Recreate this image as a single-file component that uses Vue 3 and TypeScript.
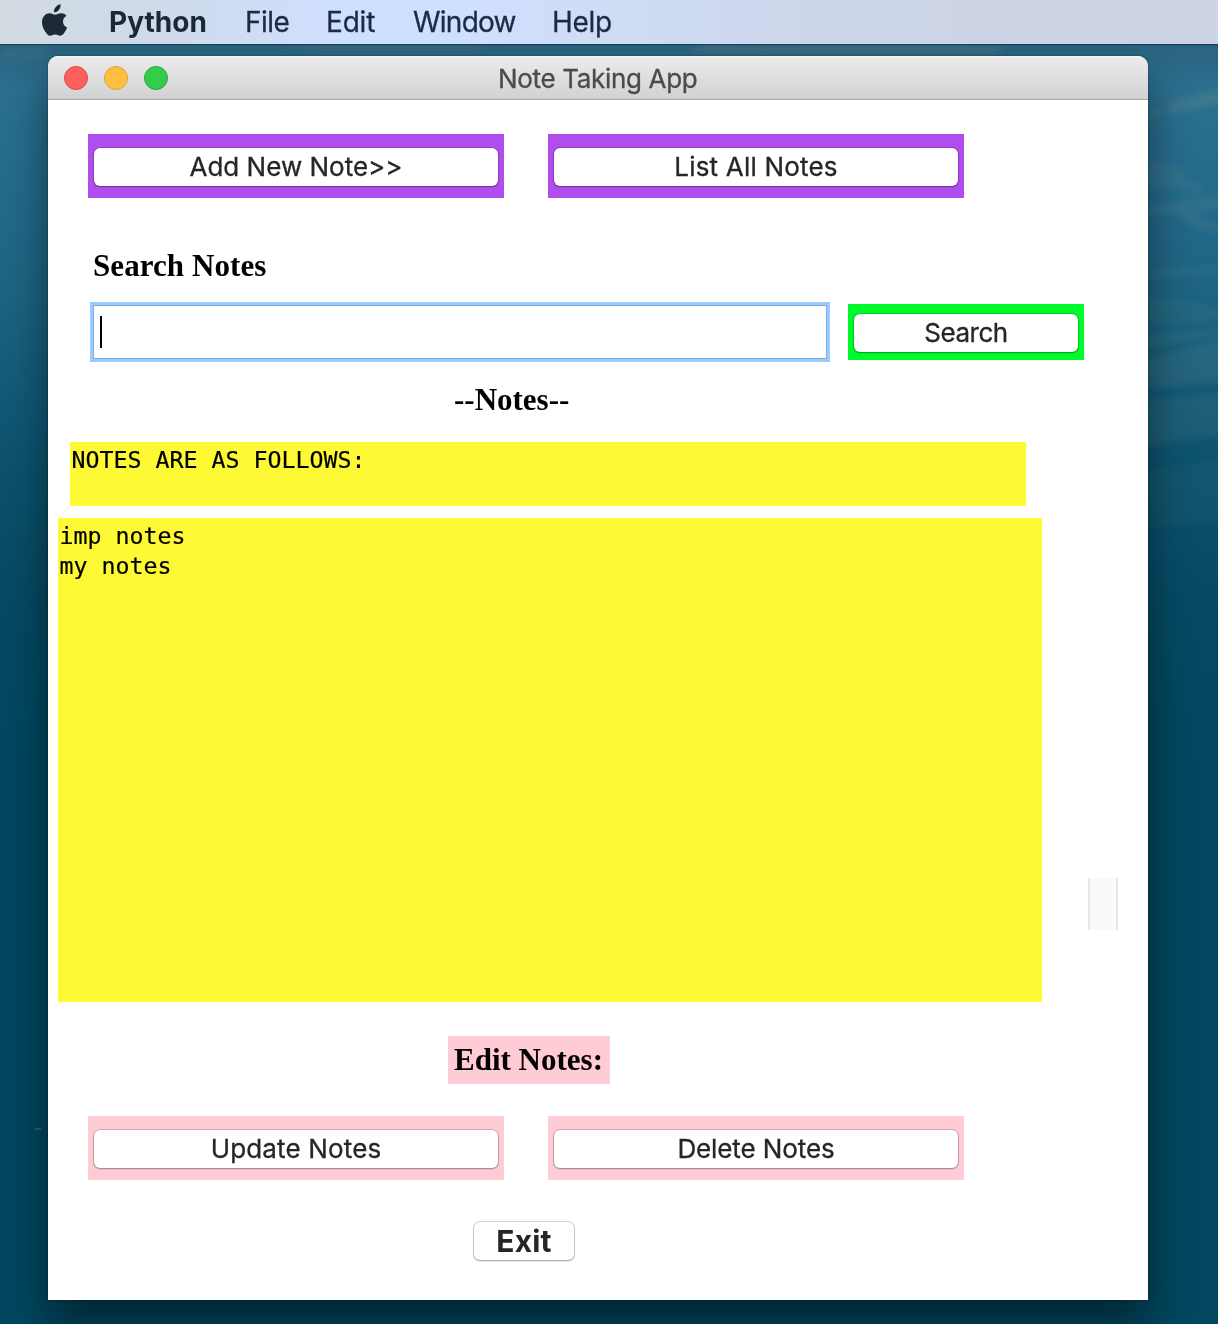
<script setup lang="ts">
import { ref } from 'vue'

interface MenuItem { label: string; cls: string }

const menus: MenuItem[] = [
  { label: 'Python', cls: 'm-app' },
  { label: 'File', cls: 'm-file' },
  { label: 'Edit', cls: 'm-edit' },
  { label: 'Window', cls: 'm-window' },
  { label: 'Help', cls: 'm-help' },
]
const notes = ref<string[]>(['imp notes', 'my notes'])
</script>

<template>
  <div class="desktop">
    <svg class="wallpaper" width="1218" height="1324" viewBox="0 0 1218 1324" aria-hidden="true">
      <defs>
        <filter id="soft" x="-30%" y="-30%" width="160%" height="160%"><feGaussianBlur stdDeviation="3" /></filter>
      </defs>
      <g filter="url(#soft)" fill="#6f8f8c">
        <path opacity=".28" d="M1168 102l40-10 14-2v14l-30 6-24 4z" />
        <path opacity=".2" d="M1140 110l22-3v9l-22 4z" />
        <path opacity=".17" d="M1140 160l38 6 12 14 14 6-8 6-30-4-26-2z" />
        <path opacity=".17" d="M1140 208l40-8 44-6v14l-30 6 30 12v8l-30-6-20-14-34 2z" />
        <path opacity=".1" d="M1140 270l84-4v8l-84 6z" />
        <path opacity=".1" d="M1140 298l40 2 44 8v12l-50 4-34 6z" />
        <path opacity=".18" d="M1140 336l84-8v6l-84 16z" />
        <path opacity=".18" d="M1140 360l84-22v44l-40 4-44 4z" />
        <path opacity=".15" d="M1140 400l84-6v40l-84 14z" />
        <path opacity=".08" d="M1140 470l84-10v60l-84 10z" />
        <path opacity=".22" d="M700 44h300v10H690z" />
        <path opacity=".15" d="M270 44h210v9H320z" />
        <path opacity=".1" d="M0 46h48v14H0z" />
      </g>
      <path d="M35 1128h6v2h-6z" fill="#6f8f8c" opacity=".4" />
    </svg>

    <header class="menubar">
      <svg class="apple" width="28" height="34" viewBox="0 0 28 34" aria-hidden="true">
        <path d="M19.600 0.300c.3 2.200-.5 4.100-1.800 5.700-1.300 1.500-2.900 2.500-4.900 2.300-.2-2.100.6-4 1.900-5.400C16 1.500 17.900.5 19.600.3z" />
        <path d="M25.500 11.700c-2.300 1.400-3.500 3.300-3.500 5.700 0 2.800 1.600 4.900 4.100 6-.8 2.400-2 4.500-3.500 6.300-1.100 1.300-2.200 2-3.600 2-1.600 0-2.400-1.100-4.800-1.100s-3.300 1.100-4.800 1.100c-1.500 0-2.600-.8-3.800-2.300C3.200 26.700 1 22.900 1 18.600c0-5.400 3.100-9.300 7.500-9.300 2.400 0 4.100 1.400 5.600 1.400s3.500-1.500 6.300-1.500c2 0 3.800.8 5.100 2.500z" />
      </svg>
      <nav class="menus">
        <span v-for="m in menus" :key="m.label" class="menu" :class="m.cls">{{ m.label }}</span>
      </nav>
    </header>

    <main class="window">
      <div class="titlebar">
        <div class="lights">
          <i class="light red"></i><i class="light amber"></i><i class="light green"></i>
        </div>
        <h1 class="title">Note Taking App</h1>
      </div>

      <div class="body">
        <div class="pair">
          <div class="frame purple"><button class="btn b-add"><span>Add New Note&gt;&gt;</span></button></div>
          <div class="frame purple"><button class="btn b-list"><span>List All Notes</span></button></div>
        </div>

        <h2 class="heading search-label">Search Notes</h2>
        <div class="search-row">
          <div class="entry"><i class="caret"></i></div>
          <div class="frame green-frame"><button class="btn b-search"><span>Search</span></button></div>
        </div>

        <h2 class="heading notes-label">--Notes--</h2>
        <div class="notes-head">NOTES ARE AS FOLLOWS:</div>
        <div class="notes-row">
          <ul class="notes">
            <li v-for="(n, i) in notes" :key="i">{{ n }}</li>
          </ul>
          <div class="scroller"></div>
        </div>

        <h2 class="heading edit-label">Edit Notes:</h2>
        <div class="pair lower">
          <div class="frame pink"><button class="btn b-update"><span>Update Notes</span></button></div>
          <div class="frame pink"><button class="btn b-delete"><span>Delete Notes</span></button></div>
        </div>
        <button class="btn exit"><span>Exit</span></button>
      </div>
    </main>
  </div>
</template>

<style>
html, body { margin: 0; overflow: hidden; }
</style>

<style scoped>
* { box-sizing: border-box; }
.desktop {
  position: relative;
  width: 1218px;
  height: 1324px;
  overflow: hidden;
  font-family: Inter, "Liberation Sans", sans-serif;
  background: linear-gradient(180deg, #2a6480 0, #2a6480 48px, #2b7090 90px, #236a8b 200px, #1e6483 290px, #155c7a 370px, #0c526e 470px, #054a64 600px, #00475f 760px, #00475f 100%);
}
.wallpaper { position: absolute; left: 0; top: 0; }
.menubar {
  position: relative;
  z-index: 2;
  display: flex;
  height: 44px;
  background: linear-gradient(90deg, #d2dbe2 0, #cfdaea 160px, #cfe0ff 350px, #cfe0ff 440px, #cfdcf4 620px, #cdd7ec 800px, #ccd3e4 1000px, #cdd3e4 100%);
  box-shadow: 0 1px 1px rgba(0, 20, 40, .45);
}
.apple { margin: 4px 0 0 41px; fill: #1d2935; flex: none; }
.menus { display: flex; margin-left: 40px; }
.menu {
  flex: none;
  font-size: 28px;
  line-height: 44px;
  color: #1b2b45;
  white-space: nowrap;
  -webkit-text-stroke: .3px currentColor;
}
.m-app { width: 136px; font-weight: 700; color: #1b2838; -webkit-text-stroke: 0; }
.m-file { width: 81px; letter-spacing: -.5px; }
.m-edit { width: 87px; letter-spacing: -.2px; }
.m-window { width: 139px; letter-spacing: -.75px; }
.m-help { letter-spacing: -.3px; }

.window {
  position: relative;
  width: 1100px;
  height: 1244px;
  margin: 12px 0 0 48px;
  background: #fff;
  border-radius: 10px 10px 0 0;
  box-shadow: 0 0 2px rgba(0, 0, 0, .5), 0 24px 44px rgba(0, 0, 0, .48);
}
.titlebar {
  display: flex;
  height: 44px;
  border-radius: 10px 10px 0 0;
  border-bottom: 1px solid #acacac;
  background: linear-gradient(180deg, #f6f6f6 0, #ebebeb 2px, #d2d2d2 42px, #c4c4c4 100%);
}
.lights { display: flex; gap: 16px; width: 450px; padding: 10px 0 0 16px; }
.light { width: 24px; height: 24px; border-radius: 50%; border: 1px solid; }
.red { background: #fc605c; border-color: #e04743; }
.amber { background: #fdbe41; border-color: #e0a033; }
.green { background: #35cb4b; border-color: #24ab35; }
.title {
  margin: 0;
  font-size: 26px;
  font-weight: 400;
  line-height: 45px;
  letter-spacing: -.33px;
  color: #4b4b4b;
  white-space: nowrap;
  -webkit-text-stroke: .3px currentColor;
}

.body { display: flex; flex-direction: column; align-items: flex-start; height: 1200px; }
.pair { display: flex; gap: 44px; margin: 34px 0 0 40px; }
.frame { padding: 14px 6px 0; width: 416px; height: 64px; }
.purple { background: #af4dee; }
.pink { background: #ffcbd5; }
.green-frame { width: 236px; height: 56px; padding-top: 10px; background: #00fa2b; }
.btn {
  display: block;
  width: 100%;
  height: 38px;
  padding: 0;
  border: 0;
  border-radius: 6px;
  background: #fff;
  box-shadow: 0 0 0 1px rgba(0, 0, 0, .16), 0 1px 2px rgba(0, 0, 0, .26);
  color: #262626;
  font: 400 26px/38px Inter, "Liberation Sans", sans-serif;
  text-align: center;
  white-space: nowrap;
  -webkit-text-stroke: .3px currentColor;
}
.btn span { display: block; height: 38px; }
.b-list { letter-spacing: .2px; }
.b-search { letter-spacing: -.5px; }
.b-update { letter-spacing: .15px; }
.b-delete { letter-spacing: -.1px; }

.heading {
  margin: 0;
  font: 700 31px/40px "Liberation Serif", serif;
  color: #000;
  white-space: nowrap;
}
.search-label { margin: 48px 0 0 45px; letter-spacing: .08px; }
.search-row { display: flex; gap: 18px; margin: 16px 0 0 42px; }
.entry {
  width: 740px;
  height: 60px;
  padding: 10px 0 0 6px;
  border: 3px solid #9dcbfc;
  box-shadow: inset 0 0 0 1px #76a9e0;
}
.caret { display: block; width: 2px; height: 32px; margin: 1px 0 0 1px; background: #000; }
.search-row .frame { margin-top: 2px; }
.notes-label { margin: 18px 0 0 406px; }
.notes-head, .notes {
  background: #fdf935;
  color: #000;
  font: 400 23.25px/30px "DejaVu Sans Mono", monospace;
  white-space: pre;
  -webkit-text-stroke: .2px currentColor;
}
.notes-head { width: 956px; height: 64px; margin: 22px 0 0 22px; padding: 3px 0 0 1.5px; }
.notes-row { display: flex; gap: 46px; margin: 12px 0 0 10px; }
.notes { width: 984px; height: 484px; margin: 0; padding: 3px 0 0 1.5px; list-style: none; }
.scroller {
  width: 30px;
  height: 52px;
  margin-top: 360px;
  background: #fafafa;
  border: solid #e8e8e8;
  border-width: 0 2px;
}
.edit-label {
  width: 162px;
  height: 48px;
  margin: 34px 0 0 400px;
  padding-left: 6px;
  line-height: 48px;
  background: #ffcbd5;
}
.lower { margin-top: 32px; }
.exit {
  width: 100px;
  margin: 42px 0 0 426px;
  font-size: 30px;
  font-weight: 700;
  line-height: 38px;
  letter-spacing: .2px;
  -webkit-text-stroke: 0;
}
</style>
